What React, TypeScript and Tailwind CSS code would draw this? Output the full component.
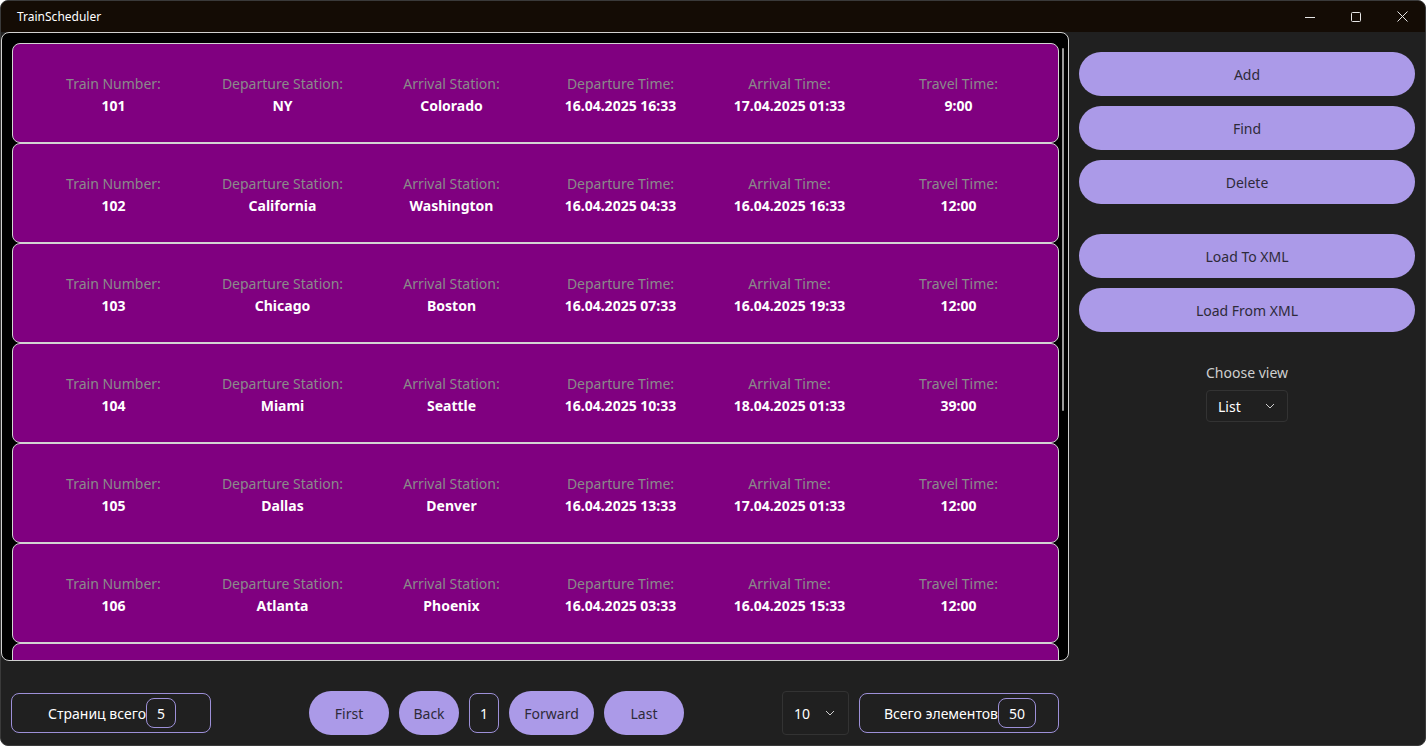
import React from "react";

const trains = [
  ["101", "NY", "Colorado", "16.04.2025 16:33", "17.04.2025 01:33", "9:00"],
  ["102", "California", "Washington", "16.04.2025 04:33", "16.04.2025 16:33", "12:00"],
  ["103", "Chicago", "Boston", "16.04.2025 07:33", "16.04.2025 19:33", "12:00"],
  ["104", "Miami", "Seattle", "16.04.2025 10:33", "18.04.2025 01:33", "39:00"],
  ["105", "Dallas", "Denver", "16.04.2025 13:33", "17.04.2025 01:33", "12:00"],
  ["106", "Atlanta", "Phoenix", "16.04.2025 03:33", "16.04.2025 15:33", "12:00"],
];

const labels = [
  "Train Number:",
  "Departure Station:",
  "Arrival Station:",
  "Departure Time:",
  "Arrival Time:",
  "Travel Time:",
];

function Chevron() {
  return (
    <svg width="10" height="6" viewBox="0 0 10 6" fill="none">
      <path d="M1 1l4 4 4-4" stroke="#cfcfcf" strokeWidth="1" />
    </svg>
  );
}

function PillButton({ children, w }: { children: React.ReactNode; w: string }) {
  return (
    <div
      className={`h-[44px] ${w} rounded-[22px] bg-[#ab9ae8] flex items-center justify-center text-[14px] text-[#2e2a3a]`}
    >
      {children}
    </div>
  );
}

export default function App() {
  return (
    <div
      className="w-[1426px] h-[746px] bg-[#202020] overflow-hidden flex flex-col border border-[#3a3a3a] rounded-[8px] relative"
      style={{ fontFamily: '"Noto Sans", "Open Sans", sans-serif' }}
    >
      {/* Title bar */}
      <div className="h-[31px] shrink-0 bg-[#140c05] flex items-center">
        <div className="pl-[16px] text-[12px] text-white">TrainScheduler</div>
        <div className="ml-auto flex items-center h-full">
          <div className="w-[46px] h-full flex items-center justify-center">
            <svg width="10" height="10" viewBox="0 0 10 10">
              <path d="M0 5.5h10" stroke="#e6e6e6" strokeWidth="1" />
            </svg>
          </div>
          <div className="w-[46px] h-full flex items-center justify-center">
            <svg width="10" height="10" viewBox="0 0 10 10">
              <rect x="0.5" y="0.5" width="9" height="9" rx="1" stroke="#e6e6e6" fill="none" />
            </svg>
          </div>
          <div className="w-[46px] h-full flex items-center justify-center">
            <svg width="11" height="11" viewBox="0 0 11 11">
              <path d="M0.5 0.5l10 10M10.5 0.5l-10 10" stroke="#e6e6e6" strokeWidth="1" />
            </svg>
          </div>
        </div>
      </div>

      <div className="flex-1 flex min-h-0">
        {/* Left */}
        <div className="w-[1069px] flex flex-col">
          <div className="h-[629px] w-[1068px] bg-black border border-[#d0d0d0] rounded-[8px] overflow-hidden relative pt-[10px] pl-[10px]">
            <div className="flex flex-col w-[1047px]">
              {trains.map((t, i) => (
                <div
                  key={i}
                  className="h-[100px] shrink-0 bg-[#800080] border border-[#d4d4d4] rounded-[8px] flex items-center"
                >
                  <div className="grid grid-cols-6 w-[1014px] ml-[16px] mt-[2px]">
                    {labels.map((l, j) => (
                      <div key={j} className="flex flex-col items-center">
                        <div className="text-[14px] leading-[19px] text-[#8a8a8a]">{l}</div>
                        <div className="text-[14px] leading-[19px] mt-[3px] font-bold text-white">{t[j]}</div>
                      </div>
                    ))}
                  </div>
                </div>
              ))}
              <div className="h-[100px] shrink-0 bg-[#800080] border border-[#d4d4d4] rounded-[8px]" />
            </div>
            <div className="absolute left-[1060px] top-[15px] w-[2px] h-[363px] bg-[#9a9a9a] rounded-full" />
          </div>

          {/* Bottom bar */}
          <div className="flex-1 flex items-center pl-[10px] pt-[20px]">
            <div className="w-[200px] h-[40px] border border-[#9d90d8] rounded-[8px] flex items-center justify-end pr-[34px] text-[14px] text-white">
              <span>Страниц всего</span>
              <span className="w-[30px] h-[30px] border border-[#9d90d8] rounded-[8px] flex items-center justify-center">5</span>
            </div>
            <div className="ml-[98px] flex items-center gap-[10px]">
              <PillButton w="w-[80px]">First</PillButton>
              <PillButton w="w-[60px]">Back</PillButton>
              <div className="w-[30px] h-[40px] border border-[#9d90d8] rounded-[8px] flex items-center justify-center text-[14px] text-white">1</div>
              <PillButton w="w-[85px]">Forward</PillButton>
              <PillButton w="w-[80px]">Last</PillButton>
            </div>
            <div className="ml-[98px] w-[67px] h-[44px] border border-[#333333] rounded-[4px] flex items-center pl-[11px] gap-[15px] text-[14px] text-white">
              <span>10</span>
              <Chevron />
            </div>
            <div className="ml-[10px] w-[200px] h-[40px] border border-[#9d90d8] rounded-[8px] flex items-center justify-end pr-[22px] text-[14px] text-white">
              <span>Всего элементов</span>
              <span className="w-[38px] h-[30px] border border-[#9d90d8] rounded-[8px] flex items-center justify-center">50</span>
            </div>
          </div>
        </div>

        {/* Right panel */}
        <div className="flex-1 flex flex-col items-center pt-[20px] pl-[10px] pr-[10px]">
          <div className="w-[336px] flex flex-col gap-[10px]">
            <PillButton w="w-full">Add</PillButton>
            <PillButton w="w-full">Find</PillButton>
            <PillButton w="w-full">Delete</PillButton>
          </div>
          <div className="w-[336px] flex flex-col gap-[10px] mt-[30px]">
            <PillButton w="w-full">Load To XML</PillButton>
            <PillButton w="w-full">Load From XML</PillButton>
          </div>
          <div className="mt-[31px] text-[14px] leading-[19px] text-[#cfcfcf]">Choose view</div>
          <div className="mt-[8px] w-[82px] h-[32px] border border-[#333333] rounded-[4px] flex items-center pl-[11px] gap-[24px] text-[14px] text-white">
            <span>List</span>
            <Chevron />
          </div>
        </div>
      </div>
    </div>
  );
}
